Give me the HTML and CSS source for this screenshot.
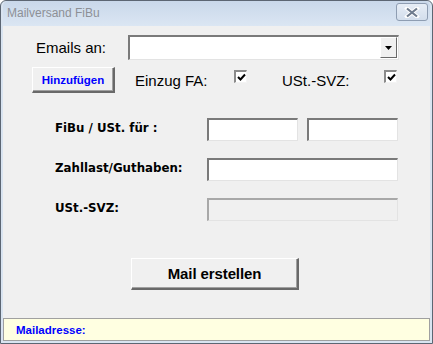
FILE: index.html
```html
<!DOCTYPE html>
<html>
<head>
    <link rel="stylesheet" href="styles.css">
</head>
<body>
    <div class="window">
        <div class="titlebar">
            <span class="title">Mailversand FiBu</span>
            <div class="close">
                <svg width="16" height="11" viewBox="0 0 16 11">
                    <path d="M3 1.5 L13 9.5 M13 1.5 L3 9.5" stroke="#fff" stroke-width="4" stroke-linecap="square"/>
                    <path d="M3 1.5 L13 9.5 M13 1.5 L3 9.5" stroke="#6f7c8e" stroke-width="2.2"/>
                </svg>
            </div>
        </div>

        <div class="client">
            <div class="row-mail">
                <span class="label-big mail-label">Emails an:</span>
                <div class="combo">
                    <div class="combo-btn">
                        <svg width="7" height="4" viewBox="0 0 7 4"><path d="M0 0 H7 L3.5 4 Z" fill="#000"/></svg>
                    </div>
                </div>
            </div>

            <div class="row-opts">
                <div class="btn btn-add">Hinzufügen</div>
                <span class="label-big opt-label einzug">Einzug FA:</span>
                <div class="check">
                    <svg width="9" height="9" viewBox="0 0 9 9"><path d="M1 4 L3.5 6.5 L8 1.5" stroke="#000" stroke-width="2" fill="none"/></svg>
                </div>
                <span class="label-big opt-label svz">USt.-SVZ:</span>
                <div class="check">
                    <svg width="9" height="9" viewBox="0 0 9 9"><path d="M1 4 L3.5 6.5 L8 1.5" stroke="#000" stroke-width="2" fill="none"/></svg>
                </div>
            </div>

            <div class="form">
                <span class="label-bold">FiBu / USt. für :</span>
                <div class="pair">
                    <div class="field small"></div>
                    <div class="field small"></div>
                </div>

                <span class="label-bold">Zahllast/Guthaben:</span>
                <div class="field"></div>

                <span class="label-bold">USt.-SVZ:</span>
                <div class="field disabled"></div>
            </div>

            <div class="btn btn-create">Mail erstellen</div>

            <div class="status">Mailadresse:</div>
        </div>
    </div>
</body>
</html>
```

FILE: styles.css
```css
body {
    margin: 0;
    width: 433px;
    height: 344px;
    overflow: hidden;
    font-family: "Liberation Sans", Arial, sans-serif;
}

.window {
    box-sizing: border-box;
    width: 433px;
    height: 344px;
    border: 1px solid #5c6673;
    border-radius: 6px 6px 0 0;
    background: #d9e4f1;
    padding: 0 2px 2px 2px;
    display: flex;
    flex-direction: column;
}

.titlebar {
    height: 25px;
    display: flex;
    align-items: center;
    justify-content: space-between;
    padding: 0 2px 0 4px;
    background: linear-gradient(#c9d8ea, #dbe6f3);
    border-radius: 5px 5px 0 0;
}

.title {
    font-size: 12px;
    color: #8d9096;
    margin-top: -1px;
}

.close {
    box-sizing: border-box;
    width: 32px;
    height: 18px;
    margin-top: -3px;
    border: 1px solid #8e9db2;
    border-radius: 3px;
    background: linear-gradient(#e6edf6, #d3deec);
    display: flex;
    align-items: center;
    justify-content: center;
}

.client {
    flex: 1;
    background: #f0f0f0;
    display: flex;
    flex-direction: column;
}

.label-big {
    font-size: 15px;
    color: #000;
}

/* first row */
.row-mail {
    display: flex;
    align-items: center;
    margin-top: 9px;
    padding-left: 33px;
}

.mail-label {
    width: 92px;
}

.combo {
    box-sizing: border-box;
    width: 271px;
    height: 25px;
    background: #fff;
    border-top: 2px solid #7a7a7a;
    border-left: 2px solid #7a7a7a;
    border-right: 1px solid #e3e3e3;
    border-bottom: 1px solid #e3e3e3;
    display: flex;
    justify-content: flex-end;
}

.combo-btn {
    box-sizing: border-box;
    width: 17px;
    height: 21px;
    margin: 0 1px 1px 0;
    background: #f0f0f0;
    border-top: 1px solid #fff;
    border-left: 1px solid #fff;
    border-right: 1px solid #696969;
    border-bottom: 1px solid #696969;
    display: flex;
    align-items: center;
    justify-content: center;
}

/* options row */
.row-opts {
    display: flex;
    align-items: flex-start;
    margin-top: 7px;
    padding-left: 29px;
}

.btn {
    box-sizing: border-box;
    background: #f0f0f0;
    border-top: 1px solid #fff;
    border-left: 1px solid #fff;
    border-right: 2px solid #696969;
    border-bottom: 2px solid #696969;
    box-shadow: inset -1px -1px 0 #a0a0a0;
    display: flex;
    align-items: center;
    justify-content: center;
}

.btn-add {
    width: 83px;
    height: 26px;
    font-size: 11.5px;
    font-weight: bold;
    color: #0000ff;
}

.opt-label {
    margin-top: 5px;
}

.einzug {
    margin-left: 20px;
    width: 99px;
}

.svz {
    margin-left: 35px;
    width: 102px;
}

.check {
    box-sizing: border-box;
    width: 13px;
    height: 13px;
    margin-top: 3px;
    background: #fff;
    border-top: 2px solid #8a8a8a;
    border-left: 2px solid #8a8a8a;
    border-right: 1px solid #f4f4f4;
    border-bottom: 1px solid #f4f4f4;
    display: flex;
    align-items: center;
    justify-content: center;
}

/* form grid */
.form {
    display: grid;
    grid-template-columns: 152px 191px;
    grid-auto-rows: 23px;
    row-gap: 17px;
    align-items: center;
    margin-top: 25px;
    padding-left: 52px;
}

.label-bold {
    font-family: "DejaVu Sans", Verdana, sans-serif;
    font-size: 11.8px;
    font-weight: bold;
    color: #000;
    margin-top: -3px;
}

.pair {
    display: flex;
    justify-content: space-between;
}

.field {
    box-sizing: border-box;
    height: 23px;
    background: #fff;
    border-top: 2px solid #7a7a7a;
    border-left: 2px solid #7a7a7a;
    border-right: 1px solid #e3e3e3;
    border-bottom: 1px solid #e3e3e3;
}

.field.small {
    width: 91px;
}

.field.disabled {
    background: #f0f0f0;
    border-top-color: #a8a8a8;
    border-left-color: #a8a8a8;
}

/* main button */
.btn-create {
    width: 168px;
    height: 32px;
    margin: 37px 0 0 128px;
    font-size: 15px;
    font-weight: bold;
    letter-spacing: -0.1px;
    color: #000;
}

.status {
    box-sizing: border-box;
    margin-top: auto;
    height: 23px;
    background: #ffffe1;
    border: 1px solid #a0a0a0;
    padding-left: 12px;
    display: flex;
    align-items: center;
    font-size: 11.5px;
    font-weight: bold;
    color: #0000ff;
}
```
